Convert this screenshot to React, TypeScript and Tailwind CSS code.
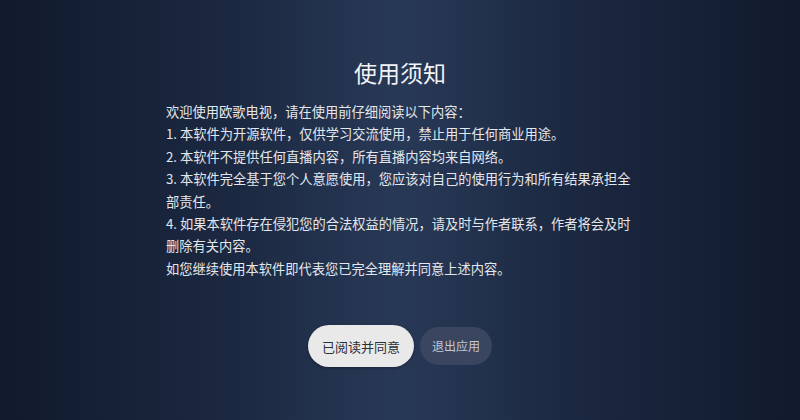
const lines = [
  "欢迎使用欧歌电视，请在使用前仔细阅读以下内容：",
  "1. 本软件为开源软件，仅供学习交流使用，禁止用于任何商业用途。",
  "2. 本软件不提供任何直播内容，所有直播内容均来自网络。",
  "3. 本软件完全基于您个人意愿使用，您应该对自己的使用行为和所有结果承担全部责任。",
  "4. 如果本软件存在侵犯您的合法权益的情况，请及时与作者联系，作者将会及时删除有关内容。",
  "如您继续使用本软件即代表您已完全理解并同意上述内容。",
];

export default function App() {
  return (
    <div
      className="w-[800px] h-[420px] overflow-hidden flex flex-col items-center pt-[56px] bg-[linear-gradient(to_right,#111a2c_0%,#1c2942_30%,#283957_50%,#1c2942_70%,#111a2c_100%)]"
      style={{ fontFamily: '"Noto Sans CJK SC", "Noto Sans", sans-serif' }}
    >
      <h1 className="text-[23px] leading-[32px] text-[#f2f3f5] font-normal">使用须知</h1>

      <div className="w-[468px] mt-[13px] text-[13.25px] leading-[22.4px] text-[#e4e7ec]">
        {lines.map((l) => (
          <p key={l}>{l}</p>
        ))}
      </div>

      <div className="flex items-center gap-[6px] mt-[45px]">
        <button className="h-[42px] px-[14px] rounded-full bg-[#e9e9ea] text-[#2b2f36] text-[13px] shadow-[0_1px_3px_rgba(0,0,0,0.35)]">
          已阅读并同意
        </button>
        <button className="h-[38px] px-[12px] rounded-full bg-[#3a4660] text-[#c3c9d3] text-[12px]">
          退出应用
        </button>
      </div>
    </div>
  );
}
